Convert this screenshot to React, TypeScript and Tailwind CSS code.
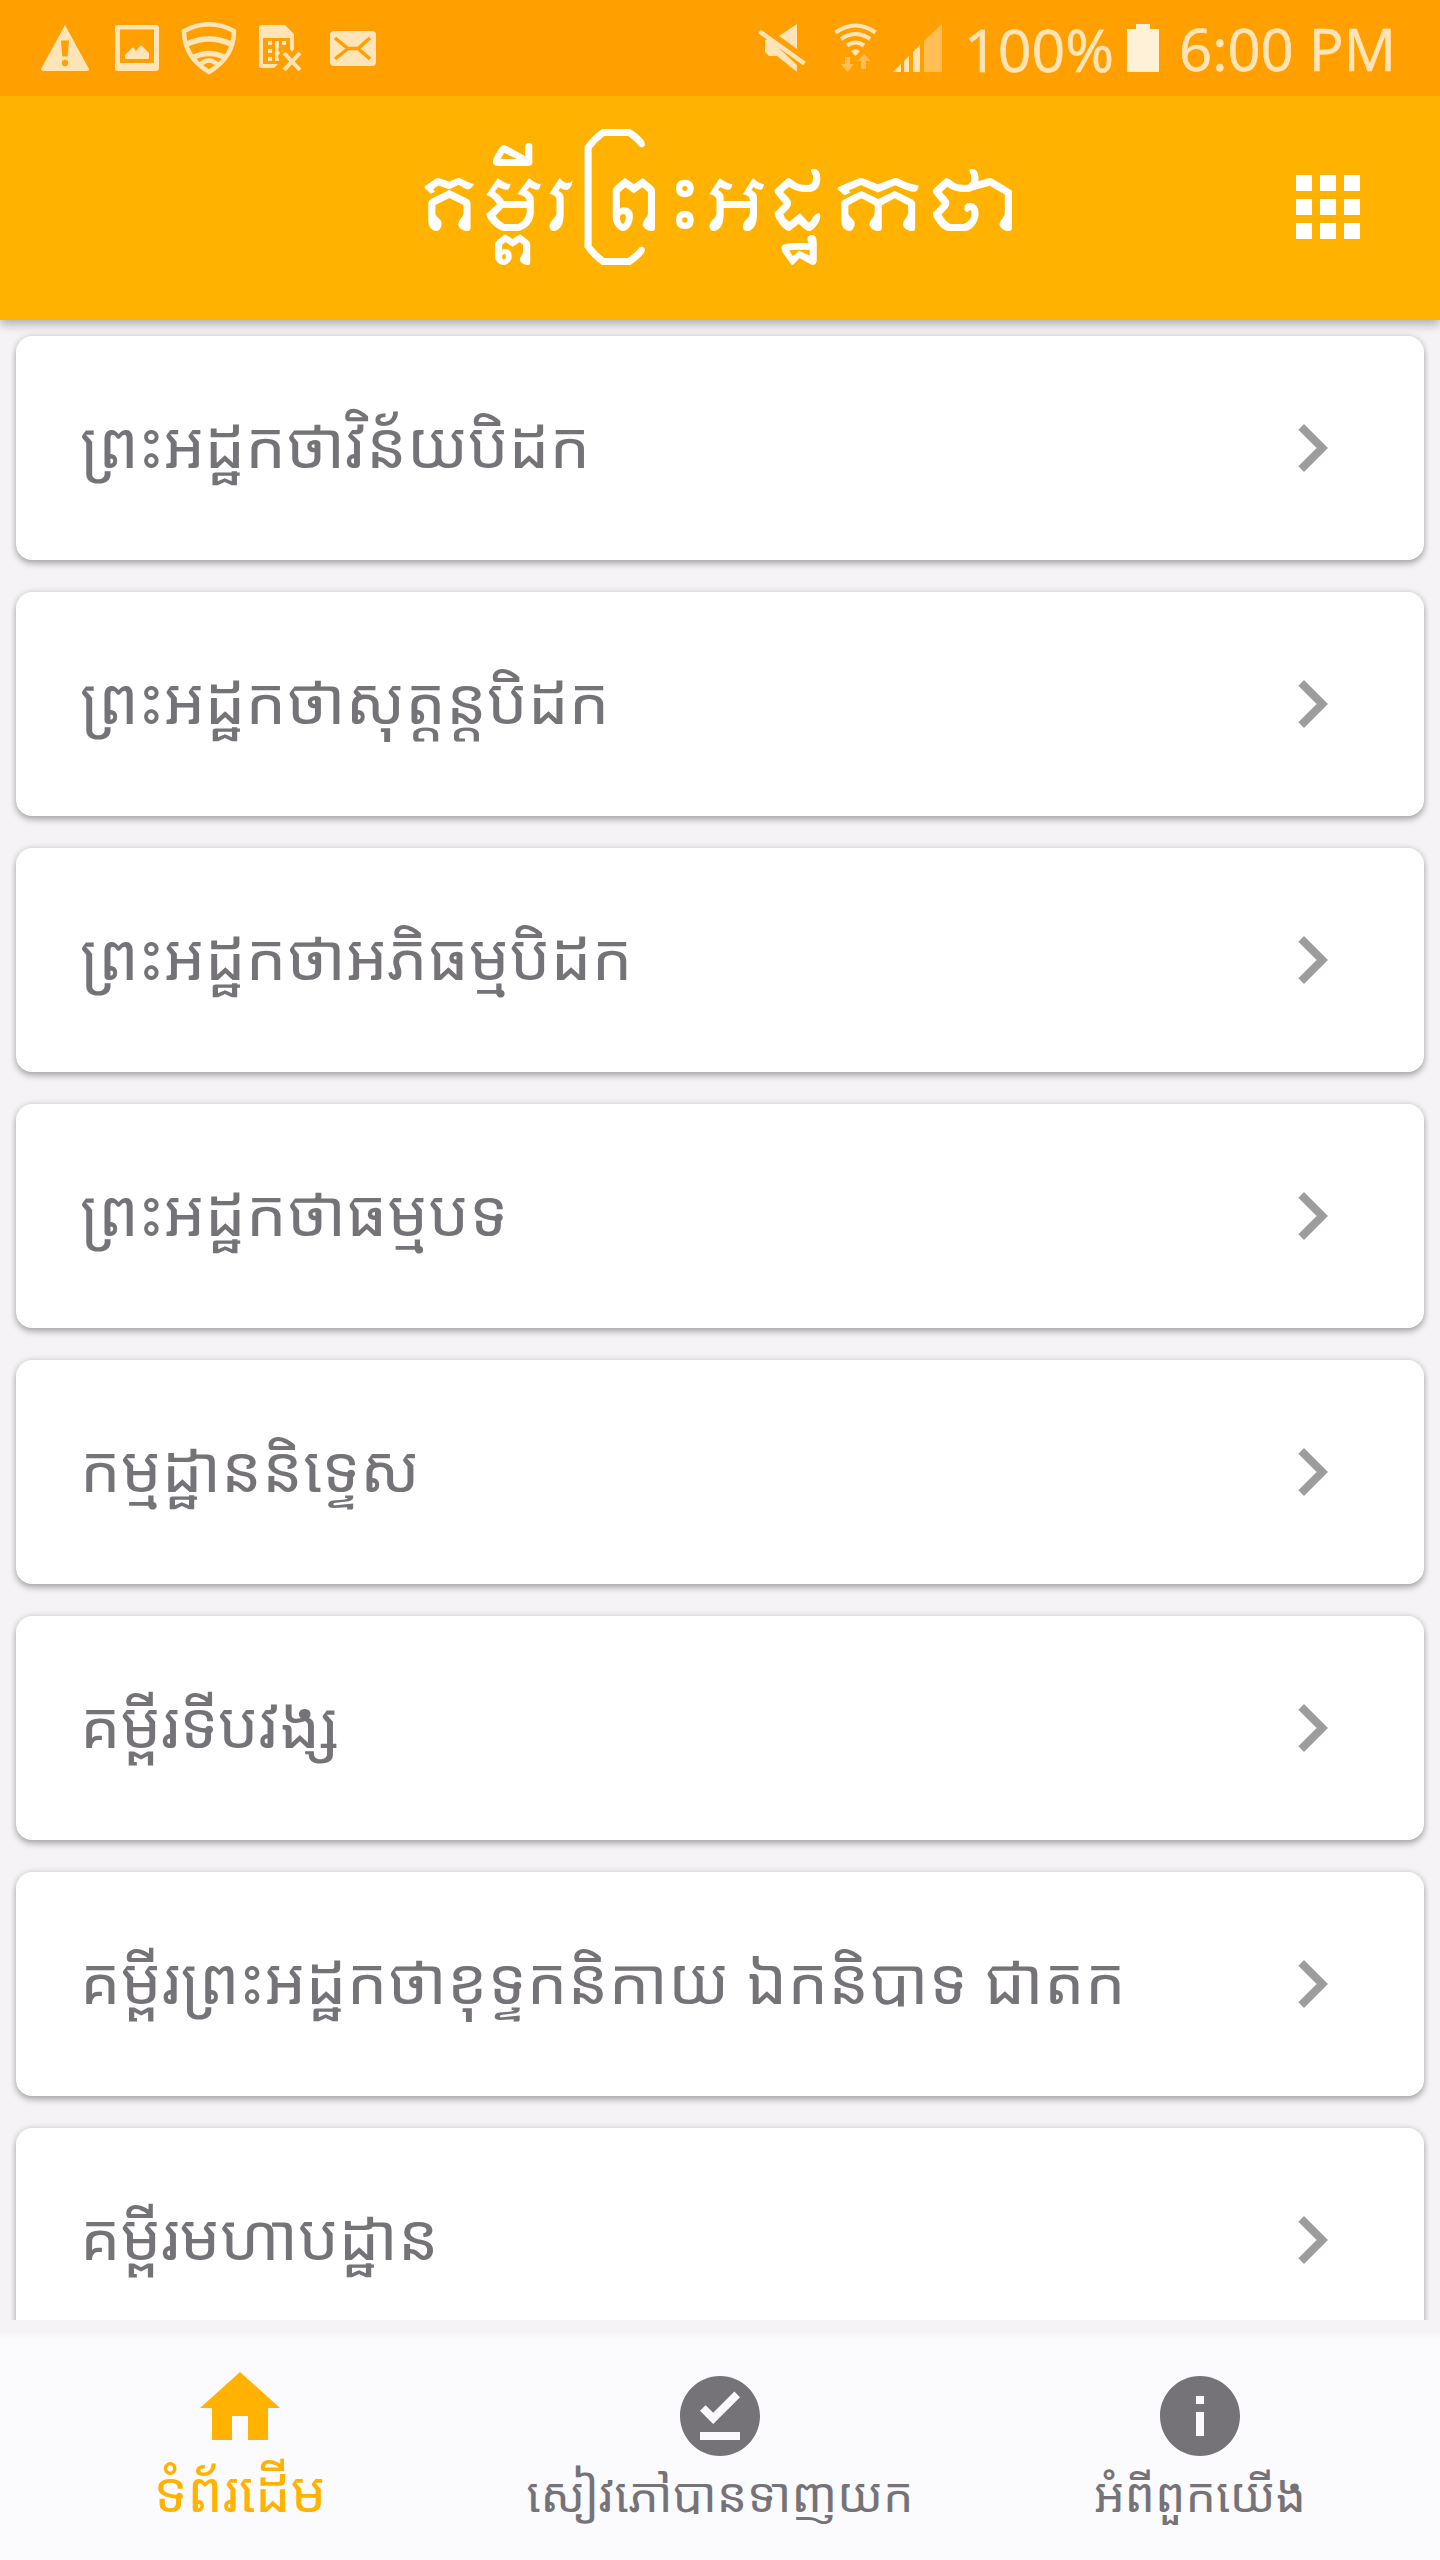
import React from 'react';

const books = [
  { title: 'ព្រះអដ្ឋកថាវិន័យបិដក', tracking: 'tracking-[0.1px]' },
  { title: 'ព្រះអដ្ឋកថាសុត្តន្តបិដក', tracking: 'tracking-[0.2px]' },
  { title: 'ព្រះអដ្ឋកថាអភិធម្មបិដក', tracking: 'tracking-[0.28px]' },
  { title: 'ព្រះអដ្ឋកថាធម្មបទ', tracking: 'tracking-[0.35px]' },
  { title: 'កម្មដ្ឋាននិទ្ទេស', tracking: 'tracking-[0.3px]' },
  { title: 'គម្ពីរទីបវង្ស', tracking: 'tracking-normal' },
  { title: 'គម្ពីរព្រះអដ្ឋកថាខុទ្ទកនិកាយ ឯកនិបាទ ជាតក', tracking: 'tracking-[0.33px]' },
  { title: 'គម្ពីរមហាបដ្ឋាន', tracking: 'tracking-normal' },
];

function StatusBar() {
  return (
    <div className="relative z-10 flex h-24 shrink-0 items-center bg-[#ffa000] text-[#ffe4b8]">
      {/* warning */}
      <svg className="ml-[41px] h-12 w-12 shrink-0" viewBox="41 24 48 48" fill="currentColor">
        <path d="M65 25 L89 69 Q89 71 87 71 H43 Q41 71 41 69 Z" />
        <path d="M61 40.500h8l-1.300 16h-5.400z" fill="#ffa000" />
        <circle cx="65" cy="63" r="3.200" fill="#ffa000" />
      </svg>
      {/* picture */}
      <svg className="ml-[26px] h-12 w-11 shrink-0" viewBox="115 24 44 48" fill="currentColor">
        <path fillRule="evenodd" d="M118 25h38a3 3 0 0 1 3 3v40a3 3 0 0 1-3 3h-38a3 3 0 0 1-3-3V28a3 3 0 0 1 3-3zM120 29.500V63h34V29.500z" />
        <path d="M125 58v-3l7-7q1-1 2 0l2 3 4-5q1-1 2 0l7 7v5q0 1-1 1h-22q-1 0-1-1z" />
      </svg>
      {/* shield */}
      <svg className="ml-[22px] h-14 w-14 shrink-0" viewBox="181 20 56 56" fill="none" stroke="currentColor" strokeWidth="4.500">
        <path d="M184 31Q209 17.500 234 31Q234 57 209 72Q184 57 184 31Z" strokeLinejoin="round" />
        <path d="M187 44Q209 34 231 44" strokeWidth="5.500" />
        <path d="M192 58Q209 49 226 58" strokeWidth="5.500" />
        <path d="M201 64Q209 57 217 64" />
      </svg>
      {/* SIM card missing */}
      <svg className="ml-[22px] h-12 w-[43px] shrink-0" viewBox="259 24 43 48" fill="currentColor">
        <path d="M262 25h23l9 9v15l-2 3-2-3V38h-27v26h15l-4 4h-12a3 3 0 0 1-3-3V28a3 3 0 0 1 3-3z" />
        <path d="M268 41h4v4h-4zM268 49h4v4h-4zM268 57h4v4h-4zM275 41h4v6l-1 3 2 3-2 3 1 5h-4zM282 41h4v4h-4z" />
        <path d="M284 53l16 17M300 53l-16 17" stroke="currentColor" strokeWidth="4" />
      </svg>
      {/* mail */}
      <svg className="ml-[27px] h-12 w-12 shrink-0" viewBox="329 24 48 48">
        <rect x="330" y="31" width="46" height="35" rx="4" fill="currentColor" />
        <path d="M335 38l13 10.500h10L370 38M335 59l13-10.500M370 59l-12-10.500" fill="none" stroke="#ffa000" strokeWidth="3.500" />
      </svg>

      {/* muted speaker */}
      <svg className="ml-[380px] h-[50px] w-[50px] shrink-0" viewBox="757 23 50 50" fill="currentColor">
        <path d="M797 24v25l-18-13zM765 40l4-1 28 26v7l-20-16h-8l-4-4z" />
        <path d="M759.500 31.500l45 32" stroke="currentColor" strokeWidth="4.500" />
      </svg>
      {/* wifi with traffic arrows */}
      <svg className="ml-[27px] h-[50px] w-11 shrink-0" viewBox="834 23 44 50" fill="none" stroke="currentColor" strokeWidth="4">
        <path d="M835.500 32.500q20-14 40 0M841 39q14.500-10 29 0M847 45.500q8.500-6 17 0" />
        <path d="M851 51q4.500-3.500 9 0l-4.500 5z" fill="currentColor" stroke="none" />
        <path d="M845 57h5v7h4l-6.500 8-6.500-8h4zM861 69h5v-8h4.500l-6.500-7-6.500 7h3.500z" fill="#ffbf55" stroke="none" />
      </svg>
      {/* signal */}
      <svg className="ml-[15px] h-12 w-[49px] shrink-0" viewBox="893 24 49 48" fill="currentColor">
        <path d="M893 72l8-8v8zM904 61l5-5v16h-5zM913 52l7-7v27h-7z" />
        <path d="M924 41l18-17v48h-18z" fill="#ffbf55" />
      </svg>
      <span className="mt-0.5 ml-[22px] font-['Open_Sans','Noto_Sans',sans-serif] text-[59px] leading-[80px] whitespace-nowrap [-webkit-text-stroke:0.6px_#ffe4b8]">
        100%
      </span>
      <svg className="ml-[13px] h-12 w-8 shrink-0" viewBox="0 0 32 48" fill="#fff0d8">
        <path d="M9 0h14v5h9v43H0V5h9z" />
      </svg>
      <span className="mt-0.5 ml-5 font-['Open_Sans','Noto_Sans',sans-serif] text-[58px] leading-[80px] whitespace-nowrap [-webkit-text-stroke:0.6px_#ffe4b8]">
        6:00 PM
      </span>
    </div>
  );
}

function Header() {
  return (
    <header className="grid h-56 shrink-0 grid-cols-[1fr_auto_1fr] items-center bg-[#ffb300] text-white shadow-[0_4px_10px_rgba(0,0,0,0.3)]">
      <span />
      <h1 className="font-['Moulpali','Noto_Sans_Khmer',sans-serif] text-[72px] leading-[120px] whitespace-nowrap">
        គម្ពីរព្រះអដ្ឋកថា
      </h1>
      <svg className="mr-20 h-16 w-16 -translate-y-px justify-self-end" viewBox="0 0 64 64" fill="currentColor">
        <path d="M0 0h16v16H0zM24 0h16v16H24zM48 0h16v16H48zM0 24h16v16H0zM24 24h16v16H24zM48 24h16v16H48zM0 48h16v16H0zM24 48h16v16H24zM48 48h16v16H48z" />
      </svg>
    </header>
  );
}

function BookCard({ title, tracking }: { title: string; tracking: string }) {
  return (
    <li className="flex h-56 shrink-0 items-center justify-between rounded-2xl bg-white px-16 shadow-[0_4px_6px_rgba(0,0,0,0.25),0_0_6px_rgba(0,0,0,0.15)]">
      <span
        className={`-mt-2 font-['Noto_Sans_Khmer','Noto_Sans',sans-serif] text-[64px] leading-[100px] whitespace-nowrap text-[#757377] ${tracking}`}
      >
        {title}
      </span>
      <svg className="h-24 w-24 shrink-0" viewBox="0 0 24 24" fill="#9e9c9f">
        <path d="M10 6 8.590 7.410 13.170 12l-4.580 4.590L10 18l6-6z" />
      </svg>
    </li>
  );
}

const tabs = [
  {
    label: 'ទំព័រដើម',
    active: true,
    icon: 'M10 20v-6h4v6h5v-8h3L12 3 2 12h3v8z',
  },
  {
    label: 'សៀវភៅបានទាញយក',
    active: false,
    icon: 'M12 2C6.500 2 2 6.500 2 12s4.500 10 10 10 10-4.500 10-10S17.500 2 12 2zm5 16H7v-2h10v2zm-6.700-4L7 10.700l1.400-1.400 1.900 1.900 5.300-5.300L17 7.300 10.300 14z',
  },
  {
    label: 'អំពីពួកយើង',
    active: false,
    icon: 'M12 2C6.480 2 2 6.480 2 12s4.480 10 10 10 10-4.480 10-10S17.520 2 12 2zm1 15h-2v-6h2v6zm0-8h-2V7h2v2z',
  },
];

function TabBar() {
  return (
    <nav className="grid h-60 shrink-0 grid-cols-3 bg-[linear-gradient(#f5f3f6_12px,#fbfafd_19px)]">
      {tabs.map((t) => (
        <div
          key={t.label}
          className={`flex flex-col items-center ${t.active ? 'pt-10 text-[#ffb300]' : 'pt-12 text-[#757377]'}`}
        >
          <svg className="h-24 w-24 shrink-0" viewBox="0 0 24 24" fill="currentColor">
            <path d={t.icon} />
          </svg>
          <span
            className={`font-['Noto_Sans_Khmer','Noto_Sans',sans-serif] leading-[64px] whitespace-nowrap ${
              t.active ? 'mt-0.5 text-[56px]' : '-mt-0.5 text-[48px]'
            }`}
          >
            {t.label}
          </span>
        </div>
      ))}
    </nav>
  );
}

export default function App() {
  return (
    <main className="flex h-[2560px] w-[1440px] flex-col overflow-hidden bg-[#f5f3f6]">
      <StatusBar />
      <Header />
      <ul className="flex min-h-0 flex-1 flex-col gap-8 overflow-hidden px-4 pt-4">
        {books.map((b) => (
          <BookCard key={b.title} title={b.title} tracking={b.tracking} />
        ))}
      </ul>
      <TabBar />
    </main>
  );
}
